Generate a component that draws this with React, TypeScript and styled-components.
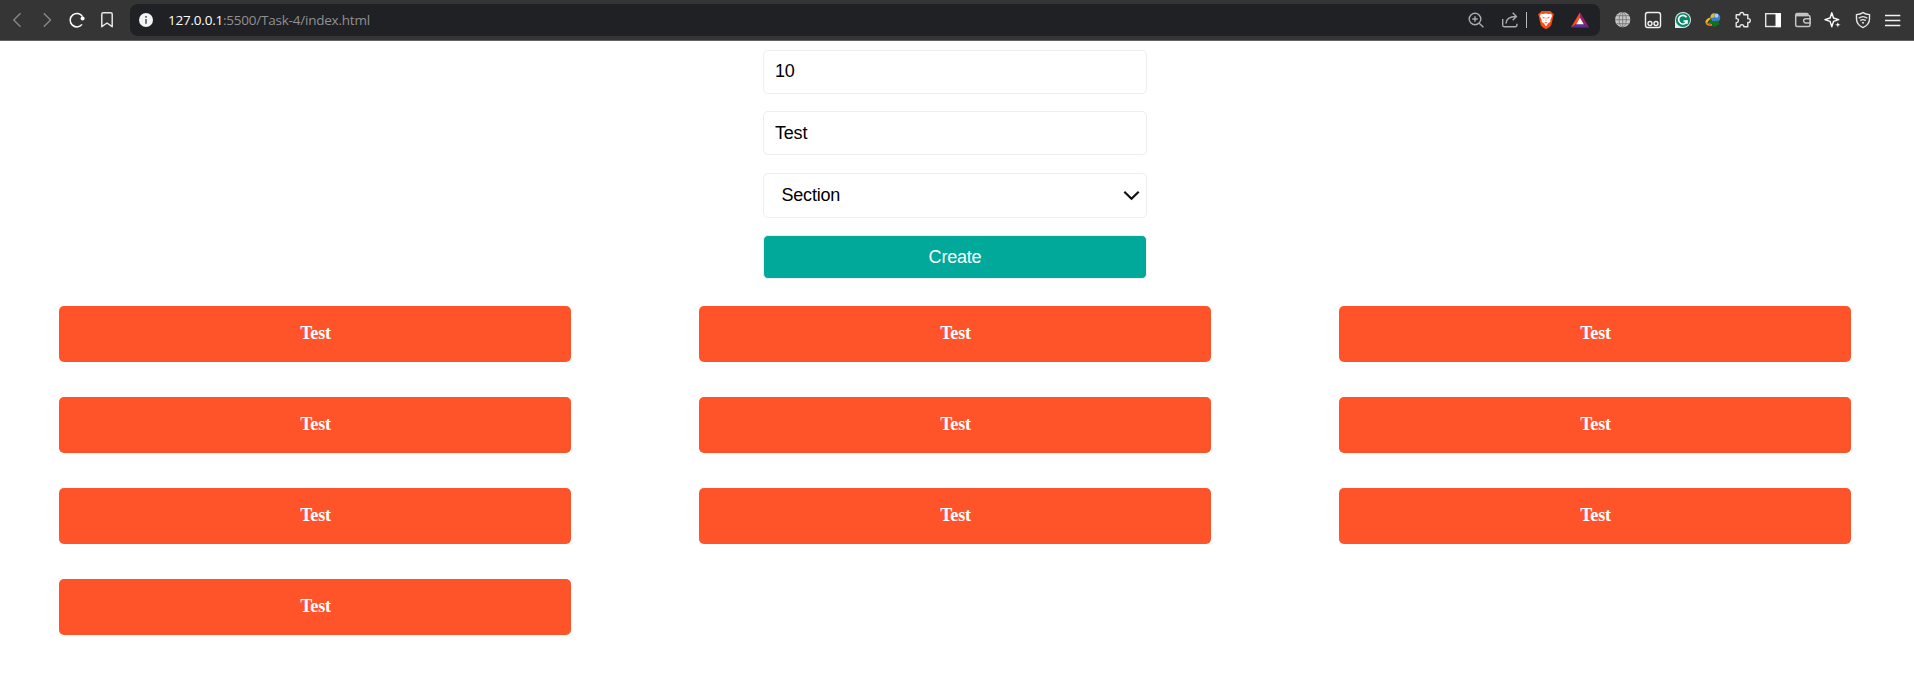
import React from "react";
import styled, { createGlobalStyle } from "styled-components";

const GlobalStyle = createGlobalStyle`
  * { box-sizing: border-box; }
  body { margin: 0; background: #fff; overflow: hidden; }
`;

const Toolbar = styled.header`
  display: flex;
  align-items: center;
  height: 41px;
  padding: 0 6px 0 2px;
  background: #353535;
  border-bottom: 1px solid #646264;
`;

const IconGroup = styled.div`
  display: flex;
`;

const IconSlot = styled.span<{ $width?: number }>`
  display: flex;
  align-items: center;
  justify-content: center;
  width: ${(p) => p.$width ?? 30}px;
  height: 40px;
  svg { display: block; flex: none; }
`;

const AddressBar = styled.div`
  display: flex;
  align-items: center;
  flex: 1;
  height: 32px;
  margin: 0 8px;
  padding: 0 6px;
  border-radius: 8px;
  background: #202124;
`;

const Url = styled.span`
  flex: 1;
  padding-left: 12px;
  font: 13.5px/20px "Open Sans", "Noto Sans", sans-serif;
  letter-spacing: -0.22px;
  color: #8f9093;
`;

const Host = styled.span`
  color: #fff;
`;

const Divider = styled.span`
  width: 1px;
  height: 16px;
  background: #b9b9ba;
`;

const Page = styled.main`
  width: 1910px;
  padding-top: 9px;
`;

const Form = styled.form`
  display: flex;
  flex-direction: column;
  width: 384px;
  margin: 0 auto;
  font: 18px "Liberation Sans", Arial, sans-serif;
  letter-spacing: -0.2px;
`;

const TextField = styled.input<{ $gap: number; $lift?: number }>`
  height: 44px;
  margin: 0 0 ${(p) => p.$gap}px;
  padding: 0 11px ${(p) => p.$lift ?? 0}px;
  border: 1px solid #eee;
  border-radius: 5px;
  outline: none;
  background: #fff;
  color: #000;
  font: inherit;
  letter-spacing: inherit;
`;

const SelectField = styled.div`
  display: flex;
  align-items: center;
  justify-content: space-between;
  height: 45px;
  margin-bottom: 17px;
  padding: 0 6px 0 17.5px;
  border: 1px solid #eee;
  border-radius: 5px;
  color: #000;
`;

const CreateButton = styled.button`
  height: 44px;
  padding: 0;
  border: 1px solid #eee;
  border-radius: 5px;
  background: #00a99a;
  color: #fff;
  font: inherit;
  letter-spacing: inherit;
`;

const CardGrid = styled.section`
  display: grid;
  grid-template-columns: repeat(3, 512px);
  gap: 35px 128px;
  padding: 27px 59px 0;
`;

const Card = styled.div`
  display: flex;
  align-items: center;
  justify-content: center;
  height: 56px;
  padding: 0 0 2px 1px;
  border-radius: 5px;
  background: #ff5329;
  color: #fff;
  font: bold 18px "Liberation Serif", "Times New Roman", serif;
  letter-spacing: -0.2px;
`;

type IconProps = { children: React.ReactNode; color?: string; weight?: number };

const Icon = ({ children, color = "#e6e6e6", weight = 1.4 }: IconProps) => (
  <svg width="20" height="20" viewBox="0 0 20 20" fill="none" stroke={color} strokeWidth={weight}>
    {children}
  </svg>
);

const BackIcon = () => (
  <Icon color="#868686"><path d="M13.5 3.3 6.8 10l6.7 6.7" /></Icon>
);
const ForwardIcon = () => (
  <Icon color="#868686"><path d="M6.8 3.3 13.5 10l-6.7 6.7" /></Icon>
);
const ReloadIcon = () => (
  <Icon weight={1.5} color="#fff">
    <path d="M15.1 14.4A6.7 6.7 0 1 1 15.6 6.7" />
    <circle cx="15.6" cy="8.4" r="2" fill="#fff" stroke="none" />
  </Icon>
);
const BookmarkIcon = () => (
  <Icon weight={1.5}><path d="M4.800 4.300a1.500 1.500 0 0 1 1.500-1.500h7.400a1.500 1.500 0 0 1 1.500 1.500v12.400L10 13l-5.200 3.700z" strokeLinejoin="round" /></Icon>
);
const InfoIcon = () => (
  <Icon>
    <circle cx="10" cy="10" r="7" fill="#f4f4f4" stroke="none" />
    <path d="M10 6v1.800M10 9v4.800" stroke="#55575a" strokeWidth="1.6" />
  </Icon>
);
const ZoomIcon = () => (
  <Icon color="#a9abad">
    <circle cx="9" cy="9" r="5.8" />
    <path d="m13.2 13.2 4.2 4M9 6.3v5.4M6.3 9h5.4" />
  </Icon>
);
const ShareIcon = () => (
  <Icon color="#a9abad">
    <path d="M2.7 9v6.2a1.6 1.6 0 0 0 1.6 1.6h11a1.6 1.6 0 0 0 1.6-1.6v-1.5" />
    <path d="M6 13.5C6.2 9 9 6.5 16.2 6.5M12.7 2.8l3.7 3.7-3.7 3.8" />
  </Icon>
);
const LionIcon = () => (
  <Icon>
    <path d="m5.5 1-1.8 2L2 4.2l.8 2.2 1.8 8.2c.3 1.2 1.1 2 2 2.6L10 19.3l3.4-2.1c.9-.6 1.7-1.4 2-2.6l1.8-8.2.8-2.2L16.3 3l-1.8-2z" fill="#fb4b13" stroke="none" />
    <path d="m10 3.500-2.300.6-2.800-.3-1 2.200 1.600 3.600.3 2.300 2.200 1.600L10 16.500l2-3 2.200-1.600.3-2.300 1.600-3.600-1-2.200-2.800.3z" fill="#fff" stroke="none" />
    <path d="m5.700 6.600 3 .9-.5 1.300zM14.300 6.600l-3 .9.5 1.300zM8.300 12.300h3.400L10 13.500z" fill="#fb4b13" stroke="none" />
    <path d="M10 7.500v3.500" stroke="#fb8a68" strokeWidth=".7" />
  </Icon>
);
const TriangleIcon = () => (
  <svg width="20" height="20" viewBox="0 0 20 20">
    <path d="M10 2.300.9 17.500 6.500 14 10 8z" fill="#ff4a22" />
    <path d="m10 2.300 9.100 15.200L13.500 14 10 8z" fill="#9c1f63" />
    <path d="M.9 17.500h18.200L13.500 14h-7z" fill="#5c3192" />
    <path d="M10 7.800 6.200 14.200h7.600z" fill="#fff" />
  </svg>
);
const GlobeIcon = () => (
  <Icon color="#666" weight={0.7}>
    <circle cx="9.700" cy="9.700" r="7.600" fill="#c6c6c6" stroke="none" />
    <ellipse cx="9.700" cy="9.700" rx="3.600" ry="7.400" />
    <path d="M9.700 2v15.400M2 9.700h15.400M3.500 5.700h12.400M3.500 13.700h12.400" />
  </Icon>
);
const FaceIcon = () => (
  <Icon color="#f0f0f0">
    <rect x="2.500" y="2.500" width="15" height="15" rx="2.200" />
    <circle cx="7" cy="13.500" r="2" />
    <circle cx="13" cy="13.500" r="2" />
  </Icon>
);
const WriterIcon = () => (
  <Icon>
    <path d="M2 10a8 8 0 1 1 8 8H2z" fill="#dceee9" stroke="none" />
    <circle cx="10" cy="10" r="7.100" fill="#0a8468" stroke="none" />
    <path d="M13.500 7.300A4.300 4.300 0 1 0 14 11h-3.500M14 10.800v3" stroke="#fff" strokeWidth="1.700" />
  </Icon>
);
const DownloadIcon = () => (
  <svg width="20" height="20" viewBox="0 0 20 20">
    <circle cx="12.500" cy="7.800" r="4.800" fill="#3d7fca" />
    <circle cx="13.500" cy="5.700" r="2" fill="#a8d2f2" />
    <path d="M11.500 3.200C9 3 7.300 5 7.200 7.500l2.800.5 1.500-1.500z" fill="#d9b83a" />
    <path d="M2.300 12.500c.3-3 2.500-4.900 5.500-5l-.8 2.300c-1.500.6-2.200 1.800-2 3z" fill="#f3bb22" />
    <path d="M2.300 12c1.500 1.300 3.500 1.300 5.500.6l1.700 2.800c-3.500 1.200-6.500 0-7.200-3.400z" fill="#e4a420" />
    <path d="M3.500 12.600c1.300.8 3 .8 4.500.3v1.600c-2 .4-3.600-.1-4.500-1.900z" fill="#c43a22" />
    <path d="m7 8.500 2.200 2.700 8.100-.7-2.600 1.700 2.300 1.900-6.500 3.200-.2-2.200C7.500 14 6 11.500 7 8.500z" fill="#087a12" />
  </svg>
);
const PuzzleIcon = () => (
  <Icon>
    <path d="M3.200 4.700h3.700c-.3-1.500.7-2.200 1.900-2.200s2.200.7 1.900 2.200h4.100v4c1.600-.3 2.500.7 2.500 1.900s-.9 2.200-2.500 1.900v4.300h-4c.2-1.400-.6-2-1.900-2s-2.100.6-1.900 2H3.200v-4.200c1.500.1 2.200-.8 2.200-2s-.7-2.100-2.200-2z" strokeLinejoin="round" />
  </Icon>
);
const PanelIcon = () => (
  <Icon>
    <rect x="2.700" y="3.700" width="14.600" height="12.800" />
    <path d="M12.500 3h5.500v14.200h-5.500z" fill="#fff" stroke="none" />
  </Icon>
);
const WalletIcon = () => (
  <Icon color="#c4c4c4" weight={1.5}>
    <path d="M2.700 5.500h12.800a1.500 1.500 0 0 1 1.500 1.500v8a1.500 1.500 0 0 1-1.500 1.500H4.200a1.500 1.500 0 0 1-1.500-1.500V5a1.500 1.500 0 0 1 1.500-1.500h9.500a1.500 1.500 0 0 1 1.500 1.500" />
    <path d="M3 3.500h11.500v2.700H3z" fill="#c4c4c4" stroke="none" />
    <path d="M17 8.700h-4.300a2.100 2.100 0 0 0 0 4.200H17z" fill="#353535" />
  </Icon>
);
const SparkleIcon = () => (
  <Icon color="#fff">
    <path d="m8.800 2.800 1.700 5.200 5.200 1.700-5.200 1.700-1.700 5.300-1.700-5.300-5.200-1.700L7.100 8z" strokeLinejoin="round" />
    <path d="m14.800 12 .8 1.900 2.100.8-2.100.8-.8 2.100-.8-2.100-2-.8 2-.8z" fill="#fff" stroke="#353535" strokeWidth=".3" />
  </Icon>
);
const ShieldIcon = () => (
  <Icon>
    <path d="M10 2.700c2 1.300 4 1.800 6.500 1.900V9c0 4.200-2.500 6.700-6.500 8.600C6 15.700 3.500 13.200 3.500 9V4.600C6 4.500 8 4 10 2.700z" />
    <path d="M5.700 8.300c2.700-2.100 5.900-2.100 8.600 0M7.300 10.600c1.800-1.300 3.600-1.300 5.400 0" />
    <circle cx="10" cy="12.700" r="1" fill="#e6e6e6" stroke="none" />
  </Icon>
);
const MenuIcon = () => (
  <Icon weight={1.300} color="#f2f2f2"><path d="M2 5.500h15.300M2 10.500h15.300M2 15.500h15.300" /></Icon>
);

const navigation = [BackIcon, ForwardIcon, ReloadIcon, BookmarkIcon];
const extensions = [
  GlobeIcon, FaceIcon, WriterIcon, DownloadIcon, PuzzleIcon,
  PanelIcon, WalletIcon, SparkleIcon, ShieldIcon, MenuIcon,
];

const Tools = ({ icons }: { icons: React.ComponentType[] }) => (
  <IconGroup>
    {icons.map((Glyph, i) => (
      <IconSlot key={i}><Glyph /></IconSlot>
    ))}
  </IconGroup>
);

export default function App() {
  return (
    <>
      <GlobalStyle />
      <Toolbar>
        <Tools icons={navigation} />
        <AddressBar>
          <IconSlot $width={20}><InfoIcon /></IconSlot>
          <Url><Host>127.0.0.1</Host>:5500/Task-4/index.html</Url>
          <IconSlot $width={34}><ZoomIcon /></IconSlot>
          <IconSlot $width={33}><ShareIcon /></IconSlot>
          <Divider />
          <IconSlot $width={38}><LionIcon /></IconSlot>
          <IconSlot $width={29}><TriangleIcon /></IconSlot>
        </AddressBar>
        <Tools icons={extensions} />
      </Toolbar>
      <Page>
        <Form onSubmit={(e) => e.preventDefault()}>
          <TextField $gap={17} $lift={2} defaultValue="10" />
          <TextField $gap={18} defaultValue="Test" />
          <SelectField>
            Section
            <svg width="17" height="11" viewBox="0 0 17 11" fill="none" stroke="#111" strokeWidth="2.200">
              <path d="m1.300 1.800 7.200 7 7.200-7" />
            </svg>
          </SelectField>
          <CreateButton type="submit">Create</CreateButton>
        </Form>
        <CardGrid>
          {Array.from({ length: 10 }, (_, i) => (
            <Card key={i}>Test</Card>
          ))}
        </CardGrid>
      </Page>
    </>
  );
}
